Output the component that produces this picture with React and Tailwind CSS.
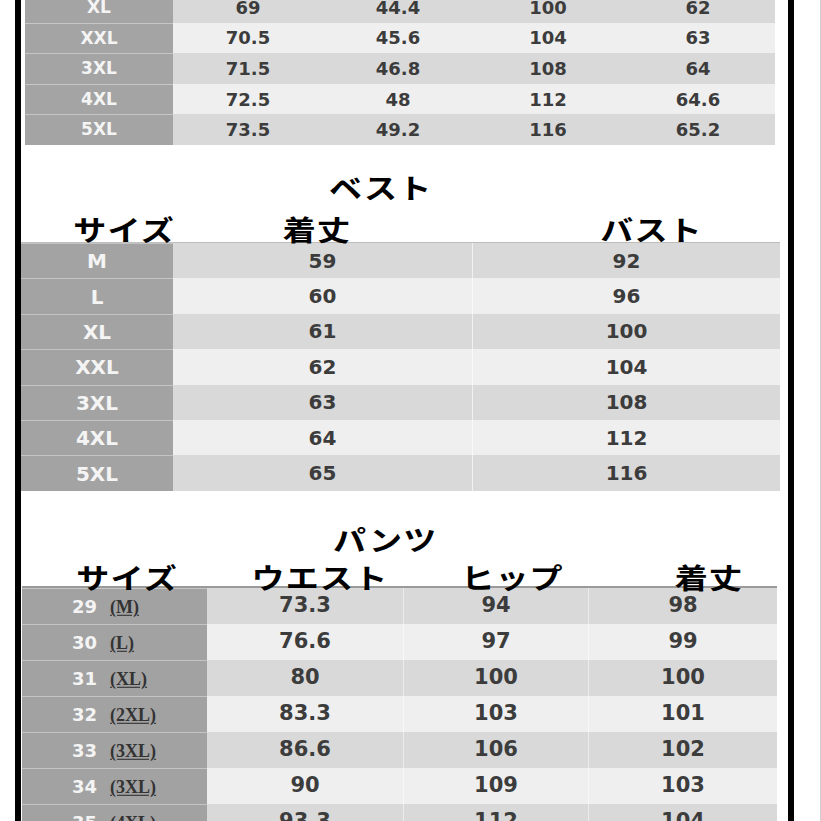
import React from 'react';

const topRows = [
  ['XL', '69', '44.4', '100', '62'],
  ['XXL', '70.5', '45.6', '104', '63'],
  ['3XL', '71.5', '46.8', '108', '64'],
  ['4XL', '72.5', '48', '112', '64.6'],
  ['5XL', '73.5', '49.2', '116', '65.2'],
];

const vestRows = [
  ['M', '59', '92'],
  ['L', '60', '96'],
  ['XL', '61', '100'],
  ['XXL', '62', '104'],
  ['3XL', '63', '108'],
  ['4XL', '64', '112'],
  ['5XL', '65', '116'],
];

const pantsRows = [
  ['29', '(M)', '73.3', '94', '98'],
  ['30', '(L)', '76.6', '97', '99'],
  ['31', '(XL)', '80', '100', '100'],
  ['32', '(2XL)', '83.3', '103', '101'],
  ['33', '(3XL)', '86.6', '106', '102'],
  ['34', '(3XL)', '90', '109', '103'],
  ['35', '(4XL)', '93.3', '112', '104'],
];

const num = "font-['DejaVu_Sans',sans-serif] font-bold text-[#3c3c3c]";
const rowBg = (i) => (i % 2 === 0 ? 'bg-[#d9d9d9]' : 'bg-[#efefef]');

// japanese headings: wide, heavy katakana
const Jp = ({ className = '', children }) => (
  <div className={`h-[30px] flex items-center justify-center ${className}`}>
    <span className="inline-block scale-x-[1.18] font-['Noto_Sans_CJK_JP',sans-serif] font-bold text-black text-[28px] leading-[30px] tracking-[1px]">
      {children}
    </span>
  </div>
);

const App = () => {
  return (
    <div className="w-[821px] h-[821px] overflow-hidden bg-white flex">
      <div className="w-[15px]" />
      <div className="w-[779px] h-full border-l-[6px] border-r-[6px] border-black flex flex-col">
        {/* top table, cut off above */}
        <div className="-mt-2 ml-[4px] w-[750px]">
          {topRows.map((r, i) => (
            <div key={i} className={`flex h-[30.6px] ${rowBg(i)}`}>
              <div className={`w-[148px] flex items-center justify-center bg-[#a4a4a4] border-t border-[#c6c6c6] text-[17px] ${num} text-[#f4f4f4]`}>{r[0]}</div>
              {r.slice(1).map((v, j) => (
                <div key={j} className={`w-[150px] flex items-center justify-center text-[18px] ${num}`}>{v}</div>
              ))}
            </div>
          ))}
        </div>

        {/* ベスト */}
        <Jp className="mt-[27px] ml-[280px] w-[160px]">ベスト</Jp>
        <div className="relative z-10 mt-[12px] flex">
          <Jp className="ml-[43px] w-[120px]">サイズ</Jp>
          <Jp className="ml-[73px] w-[120px]">着丈</Jp>
          <Jp className="ml-[195px] w-[160px]">バスト</Jp>
        </div>
        <div className="-mt-[2px] w-[759px] border-t border-[#bdbdbd]">
          {vestRows.map((r, i) => (
            <div key={i} className={`flex h-[35.4px] ${rowBg(i)}`}>
              <div className={`w-[152px] flex items-center justify-center bg-[#a3a3a3] border-t border-[#c4c4c4] text-[20px] ${num} text-[#f4f4f4]`}>{r[0]}</div>
              <div className={`w-[299px] flex items-center justify-center text-[20px] ${num}`}>{r[1]}</div>
              <div className={`w-[308px] flex items-center justify-center border-l border-white/60 text-[20px] ${num}`}>{r[2]}</div>
            </div>
          ))}
        </div>

        {/* パンツ */}
        <Jp className="mt-[33px] ml-[284px] w-[160px]">パンツ</Jp>
        <div className="relative z-10 mt-[8px] flex">
          <Jp className="ml-[46px] w-[120px]">サイズ</Jp>
          <Jp className="ml-[53px] w-[160px]">ウエスト</Jp>
          <Jp className="ml-[43px] w-[140px]">ヒップ</Jp>
          <Jp className="ml-[66px] w-[120px]">着丈</Jp>
        </div>
        <div className="-mt-[6px] ml-px w-[755px] border-t-2 border-[#9a9a9a]">
          {pantsRows.map((r, i) => (
            <div key={i} className={`flex h-[36px] ${rowBg(i)}`}>
              <div className="w-[185px] flex items-center pl-[50px] gap-[13px] bg-[#a2a2a2] border-t border-[#c4c4c4]">
                <span className={`text-[18px] ${num} text-[#f4f4f4]`}>{r[0]}</span>
                <span className="inline-block font-['Liberation_Serif',serif] font-bold text-[18px] text-[#333333] underline underline-offset-2 scale-y-110">{r[1]}</span>
              </div>
              <div className={`w-[196px] flex items-center justify-center text-[21px] ${num}`}>{r[2]}</div>
              <div className={`w-[185px] flex items-center justify-center border-l border-white/50 text-[21px] ${num}`}>{r[3]}</div>
              <div className={`w-[189px] flex items-center justify-center border-l border-white/50 text-[21px] ${num}`}>{r[4]}</div>
            </div>
          ))}
        </div>
      </div>
      <div className="w-[26px]" />
      <div className="w-px h-full bg-[#d0d0d0]" />
    </div>
  );
};

export default App;
